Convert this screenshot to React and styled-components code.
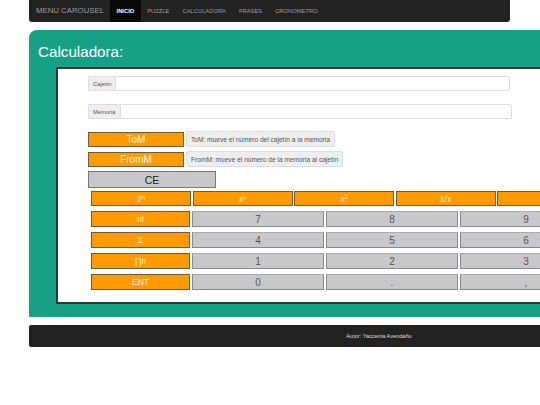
import styled, { createGlobalStyle } from 'styled-components'

const GlobalStyle = createGlobalStyle`
  html, body {
    margin: 0;
    padding: 0;
    background: #fff;
    overflow: hidden;
    font-family: "Liberation Sans", Arial, sans-serif;
  }
`

const Page = styled.div`
  width: 760px;
  padding-left: 29px;
`

const Navbar = styled.nav`
  width: 481px;
  height: 22px;
  background: #222;
  border-radius: 0 0 3px 3px;
  display: flex;
  align-items: stretch;
`

const Brand = styled.div`
  color: #9d9d9d;
  font-size: 7.8px;
  line-height: 22px;
  padding: 0 6px 0 7px;
`

const NavLink = styled.div`
  color: ${p => (p.active ? '#fff' : '#9d9d9d')};
  background: ${p => (p.active ? '#080808' : 'transparent')};
  font-weight: ${p => (p.active ? 'bold' : 'normal')};
  font-size: 5.8px;
  line-height: 22px;
  padding: 0 6.5px;
`

const Panel = styled.section`
  margin-top: 8px;
  width: 700px;
  background: #16a085;
  border-radius: 8px 0 0 0;
  padding: 13px 0 13px 0;
`

const Title = styled.h1`
  margin: 0 0 7px 9px;
  font-weight: normal;
  font-size: 15.2px;
  line-height: 17px;
  color: #fff;
`

const Board = styled.div`
  margin-left: 27px;
  background: #fff;
  border: 2px solid #333;
  border-right: none;
  padding: 7px 0 11px 30px;
  height: 215px;
`

const InputGroup = styled.div`
  display: flex;
  height: 15px;
  width: ${p => p.w}px;
  margin-bottom: ${p => p.mb}px;
`

const Addon = styled.span`
  background: #eee;
  border: 1px solid #ddd;
  border-right: none;
  border-radius: 2px 0 0 2px;
  color: #555;
  font-size: 5.8px;
  display: flex;
  align-items: center;
  padding: 0 4px;
`

const Field = styled.div`
  flex: 1;
  border: 1px solid #ddd;
  border-radius: 0 2px 2px 0;
  background: #fff;
`

const ActionRow = styled.div`
  display: flex;
  align-items: center;
  gap: 2px;
  margin-bottom: 4px;
`

const OrangeButton = styled.div`
  box-sizing: border-box;
  width: ${p => p.w}px;
  height: ${p => p.h}px;
  background: #ff9a00;
  border: 1px solid #6e5a3c;
  color: #fff6e6;
  font-size: ${p => p.fs}px;
  display: flex;
  align-items: center;
  justify-content: center;

  sup {
    font-size: 0.7em;
    line-height: 0;
    position: relative;
    top: -0.25em;
  }
`

const Hint = styled.div`
  background: #eee;
  border: 1px solid #ddd;
  border-radius: 2px;
  color: #555;
  font-size: 6.6px;
  height: 14px;
  display: flex;
  align-items: center;
  padding: 0 4px;
`

const ClearButton = styled.div`
  box-sizing: border-box;
  width: 128px;
  height: 17px;
  background: #c8c8cb;
  border: 1px solid #777;
  color: #222;
  font-size: 10.5px;
  display: flex;
  align-items: center;
  justify-content: center;
  margin-bottom: 3px;
`

const HeadRow = styled.div`
  display: flex;
  gap: 1.5px;
  margin-left: 3px;
  margin-bottom: 5px;
`

const KeyRow = styled.div`
  display: flex;
  gap: 2px;
  margin-left: 3px;
  margin-bottom: 5px;
`

const GreyKey = styled.div`
  box-sizing: border-box;
  width: 132px;
  height: 16px;
  background: #c8c8cb;
  border: 1.5px solid #8a8a8a;
  border-top-color: #aaa;
  color: #555;
  font-size: 10px;
  display: flex;
  align-items: center;
  justify-content: center;
`

const Footer = styled.footer`
  margin-top: 8px;
  width: 700px;
  height: 22px;
  background: #222;
  border-radius: 2px 0 0 2px;
  color: #ddd;
  font-size: 5.6px;
  display: flex;
  align-items: center;
  justify-content: center;
`

const rows = [
  ['n!', '7', '8', '9'],
  ['Σ', '4', '5', '6'],
  ['∏n', '1', '2', '3'],
  ['ENT', '0', '.', ','],
]

export default function App() {
  return (
    <>
      <GlobalStyle />
      <Page>
        <Navbar>
          <Brand>MENU CAROUSEL</Brand>
          <NavLink active>INICIO</NavLink>
          <NavLink>PUZZLE</NavLink>
          <NavLink>CALCULADORA</NavLink>
          <NavLink>FRASES</NavLink>
          <NavLink>CRONOMETRO</NavLink>
        </Navbar>

        <Panel>
          <Title>Calculadora:</Title>
          <Board>
            <InputGroup w={422} mb={13}>
              <Addon>Cajetín</Addon>
              <Field />
            </InputGroup>
            <InputGroup w={424} mb={12}>
              <Addon>Memoria</Addon>
              <Field />
            </InputGroup>

            <ActionRow>
              <OrangeButton w={96} h={15} fs={10}>ToM</OrangeButton>
              <Hint>ToM: mueve el número del cajetín a la memoria</Hint>
            </ActionRow>
            <ActionRow>
              <OrangeButton w={96} h={15} fs={10}>FromM</OrangeButton>
              <Hint>FromM: mueve el número de la memoria al cajetín</Hint>
            </ActionRow>
            <ClearButton>CE</ClearButton>

            <HeadRow>
              <OrangeButton w={100} h={15} fs={8.5}>2<sup>n</sup></OrangeButton>
              <OrangeButton w={100} h={15} fs={8.5}>x<sup>y</sup></OrangeButton>
              <OrangeButton w={100} h={15} fs={8.5}>x<sup>2</sup></OrangeButton>
              <OrangeButton w={100} h={15} fs={8.5}>1/x</OrangeButton>
              <OrangeButton w={100} h={15} fs={8.5}></OrangeButton>
            </HeadRow>

            {rows.map(r => (
              <KeyRow key={r[0]}>
                <OrangeButton w={99} h={16} fs={8.5}>{r[0]}</OrangeButton>
                <GreyKey>{r[1]}</GreyKey>
                <GreyKey>{r[2]}</GreyKey>
                <GreyKey>{r[3]}</GreyKey>
              </KeyRow>
            ))}
          </Board>
        </Panel>

        <Footer>Autor: Yaccenia Avendaño</Footer>
      </Page>
    </>
  )
}
